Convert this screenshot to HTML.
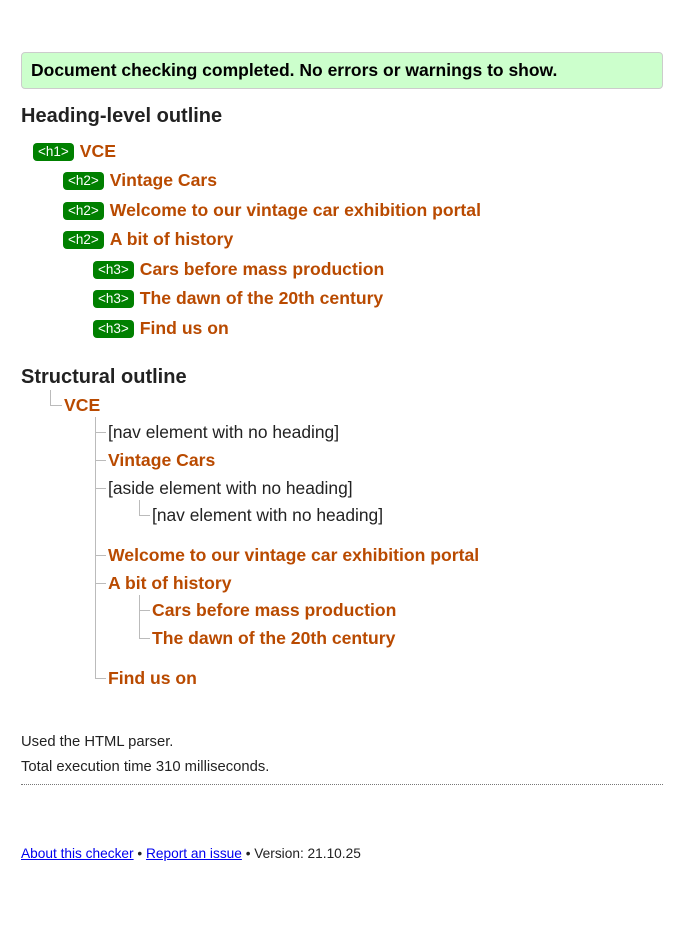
<!DOCTYPE html>
<html><head><meta charset="utf-8"><style>
body{margin:0;width:684px;height:934px;background:#fff;font-family:"Liberation Sans",Arial,sans-serif;color:#222;position:relative;overflow:hidden}
.a{position:absolute;white-space:nowrap;line-height:20px}
.box{position:absolute;left:21px;top:52px;width:640px;height:35px;background:#ccffcc;border:1px solid #ccc;border-radius:4px}
.msg{left:31px;top:60px;font-weight:bold;font-size:17.5px;color:#000}
.hd{font-weight:bold;font-size:20px;color:#222}
.o{font-weight:bold;font-size:17.6px;color:#b94a00}
.b{display:inline-block;background:#008000;color:#fff;font-size:13.5px;font-weight:normal;border-radius:4px;padding:0 5px;line-height:18px;margin-right:6px;vertical-align:1px}
.n{font-size:17.4px;color:#222}
.v{position:absolute;width:1px;background:#bbb}
.h{position:absolute;height:1px;background:#bbb}
.f{font-size:14.8px;color:#222}
a{color:#00e}
</style></head><body>
<div class="box"></div>
<div class="a msg">Document checking completed. No errors or warnings to show.</div>
<div class="a hd" style="left:21px;top:106px">Heading-level outline</div>
<div class="a o" style="left:33px;top:141px"><span class="b">&lt;h1&gt;</span>VCE</div>
<div class="a o" style="left:63px;top:170px"><span class="b">&lt;h2&gt;</span>Vintage Cars</div>
<div class="a o" style="left:63px;top:200px"><span class="b">&lt;h2&gt;</span>Welcome to our vintage car exhibition portal</div>
<div class="a o" style="left:63px;top:229px"><span class="b">&lt;h2&gt;</span>A bit of history</div>
<div class="a o" style="left:93px;top:259px"><span class="b">&lt;h3&gt;</span>Cars before mass production</div>
<div class="a o" style="left:93px;top:288px"><span class="b">&lt;h3&gt;</span>The dawn of the 20th century</div>
<div class="a o" style="left:93px;top:318px"><span class="b">&lt;h3&gt;</span>Find us on</div>

<div class="a hd" style="left:21px;top:367px">Structural outline</div>
<div class="v" style="left:50px;top:390px;height:15px"></div><div class="h" style="left:50px;top:405px;width:12px"></div>
<div class="a o" style="left:64px;top:395px">VCE</div>
<div class="v" style="left:95px;top:417px;height:261px"></div>
<div class="h" style="left:95px;top:432px;width:11px"></div>
<div class="a n" style="left:108px;top:422px">[nav element with no heading]</div>
<div class="h" style="left:95px;top:460px;width:11px"></div>
<div class="a o" style="left:108px;top:450px">Vintage Cars</div>
<div class="h" style="left:95px;top:488px;width:11px"></div>
<div class="a n" style="left:108px;top:478px">[aside element with no heading]</div>
<div class="v" style="left:139px;top:500px;height:15px"></div><div class="h" style="left:139px;top:515px;width:11px"></div>
<div class="a n" style="left:152px;top:505px">[nav element with no heading]</div>
<div class="h" style="left:95px;top:555px;width:11px"></div>
<div class="a o" style="left:108px;top:545px">Welcome to our vintage car exhibition portal</div>
<div class="h" style="left:95px;top:583px;width:11px"></div>
<div class="a o" style="left:108px;top:573px">A bit of history</div>
<div class="v" style="left:139px;top:595px;height:43px"></div>
<div class="h" style="left:139px;top:610px;width:11px"></div>
<div class="a o" style="left:152px;top:600px">Cars before mass production</div>
<div class="h" style="left:139px;top:638px;width:11px"></div>
<div class="a o" style="left:152px;top:628px">The dawn of the 20th century</div>
<div class="h" style="left:95px;top:678px;width:11px"></div>
<div class="a o" style="left:108px;top:668px">Find us on</div>

<div class="a f" style="left:21px;top:732px">Used the HTML parser.</div>
<div class="a f" style="left:21px;top:757px">Total execution time 310 milliseconds.</div>
<div style="position:absolute;left:21px;top:784px;width:642px;border-top:1px dotted #777"></div>
<div class="a" style="left:21px;top:844px;font-size:13.7px;color:#222"><a href="#">About this checker</a> • <a href="#">Report an issue</a> • Version: 21.10.25</div>
</body></html>
